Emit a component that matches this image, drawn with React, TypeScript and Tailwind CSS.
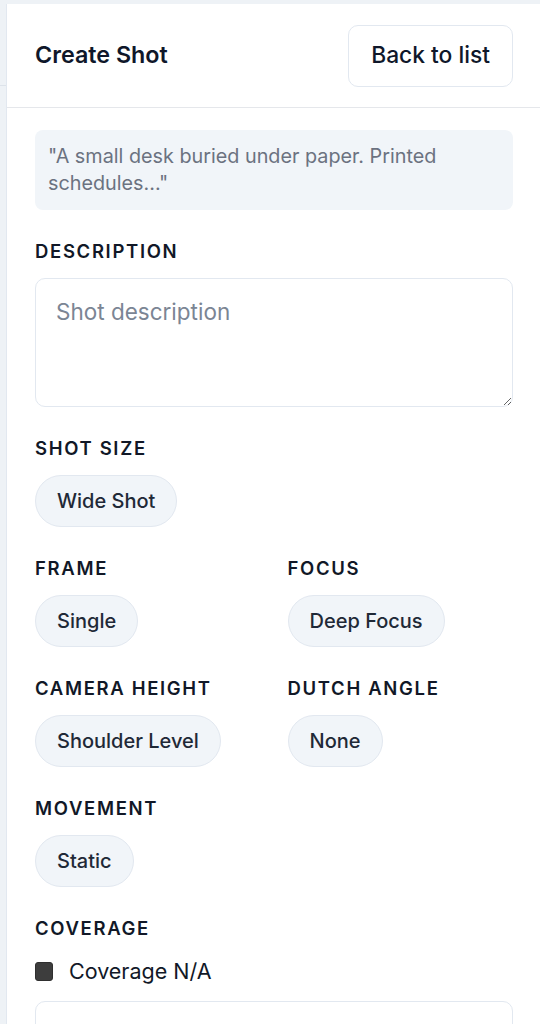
import React from "react";

const FONT = { fontFamily: "Inter, 'Noto Sans', 'Liberation Sans', sans-serif" };

function Label({ children }: { children: React.ReactNode }) {
  return (
    <div className="text-[18.5px] font-semibold leading-[24px] tracking-[0.09em] text-[#111827]">
      {children}
    </div>
  );
}

function Chip({ children }: { children: React.ReactNode }) {
  return (
    <button className="h-[52px] rounded-full border border-[#e2e8f0] bg-[#f1f5f9] px-[21px] text-[20px] font-medium text-[#1f2937]">
      {children}
    </button>
  );
}

function Field({ label, value }: { label: string; value: string }) {
  return (
    <div className="flex flex-col items-start gap-[15px]">
      <Label>{label}</Label>
      <Chip>{value}</Chip>
    </div>
  );
}

export default function App() {
  return (
    <div className="flex min-h-[1024px] w-[540px] bg-[#eef2f6] pt-[4px]" style={FONT}>
      {/* left rail */}
      <div className="w-[6px] shrink-0">
        <div className="h-[82px] border-b border-[#dde3ea]" />
      </div>

      {/* panel */}
      <div className="flex flex-1 flex-col border-l border-[#e2e8f0] bg-white">
        {/* header */}
        <div className="flex h-[104px] items-center justify-between border-b border-[#e5e7eb] pl-[28px] pr-[27px]">
          <h1 className="text-[23.3px] font-semibold text-[#0f172a]">Create Shot</h1>
          <button className="h-[62px] rounded-[10px] border border-[#e2e8f0] bg-white px-[22px] text-[22.8px] font-medium text-[#0f172a]">
            Back to list
          </button>
        </div>

        {/* body */}
        <div className="flex flex-col gap-[29px] pl-[28px] pr-[27px] pt-[22px]">
          <div className="rounded-[8px] bg-[#f1f5f9] px-[13px] py-[13px] text-[19.8px] leading-[27px] text-[#6b7280]">
            "A small desk buried under paper. Printed schedules..."
          </div>

          <div className="flex flex-col gap-[15px]">
            <Label>DESCRIPTION</Label>
            <textarea
              placeholder="Shot description"
              className="h-[129px] w-full rounded-[10px] border border-[#e2e8f0] px-[20px] py-[16px] text-[22.5px] text-[#0f172a] outline-none placeholder:text-[#7b8594]"
            />
          </div>

          <Field label="SHOT SIZE" value="Wide Shot" />

          <div className="grid grid-cols-2 gap-x-[27px] gap-y-[29px]">
            <Field label="FRAME" value="Single" />
            <Field label="FOCUS" value="Deep Focus" />
            <Field label="CAMERA HEIGHT" value="Shoulder Level" />
            <Field label="DUTCH ANGLE" value="None" />
          </div>

          <Field label="MOVEMENT" value="Static" />

          <div className="flex flex-col">
            <Label>COVERAGE</Label>
            <label className="mt-[17px] flex h-[28px] items-center gap-[16px]">
              <span className="h-[19px] w-[18px] rounded-[3px] border border-[#2f2f2f] bg-[#3d3d3d]" />
              <span className="text-[21.5px] text-[#111827]">Coverage N/A</span>
            </label>
            <div className="mt-[16px] h-[60px] rounded-[10px] border border-[#e2e8f0]" />
          </div>
        </div>
      </div>
    </div>
  );
}
